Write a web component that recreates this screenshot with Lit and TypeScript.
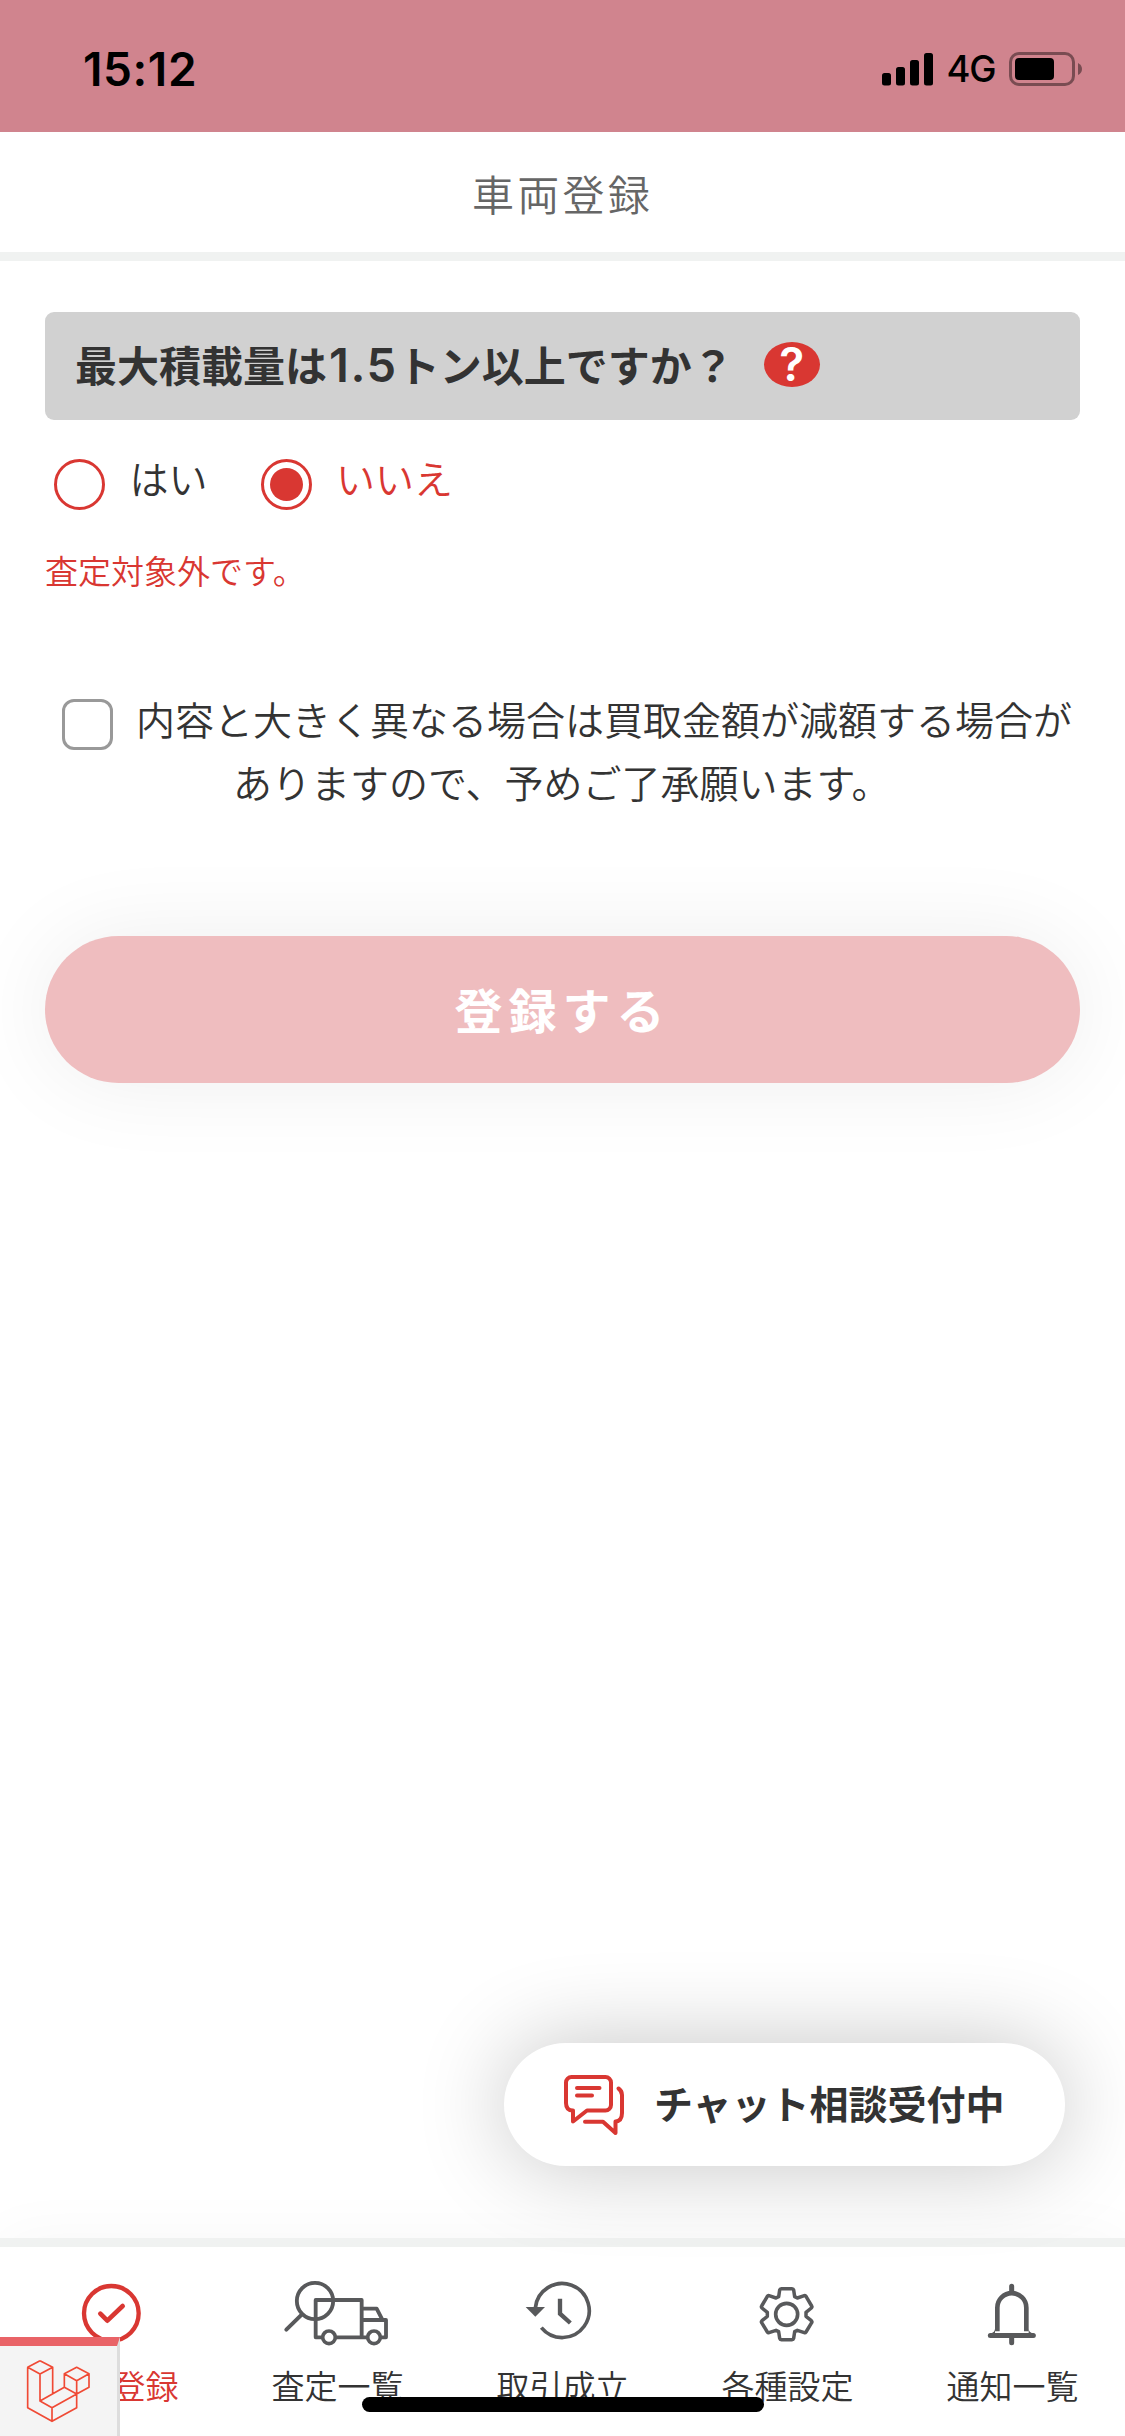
import { LitElement, html, css, svg } from "lit";
import { customElement, property, state } from "lit/decorators.js";
import { classMap } from "lit/directives/class-map.js";

const tabIcons: Record<string, { viewBox: string; art: unknown }> = {
  check: {
    viewBox: "0 63 675 330",
    art: svg`<circle cx="334" cy="262" r="82" stroke-width="13"/>
      <path d="M301 263L322 284L368 240" stroke-width="14"/>`,
  },
  truck: {
    viewBox: "675 63 675 330",
    art: svg`<circle cx="945" cy="225" r="54.5" stroke-width="11.5"/>
      <path d="M905 266L859 311" stroke-width="12"/>
      <path d="M966 334H947V222H1085V334M1007 334H1102M1088 248H1130L1147 281M1088 282H1158V334H1144" stroke-width="11.5"/>
      <circle cx="987" cy="334" r="19" stroke-width="11"/>
      <circle cx="1122" cy="334" r="19" stroke-width="11"/>`,
  },
  history: {
    viewBox: "150 63 675 330",
    art: svg`<path d="M424 305A81 81 0 1 0 406 246" stroke-width="11" stroke-linecap="butt"/>
      <path d="M377 243H435L406 272Z" fill="currentColor" stroke="none"/>
      <path d="M480 218V263L511 291" stroke-width="13" stroke-linecap="butt" stroke-linejoin="miter"/>`,
  },
  gear: {
    viewBox: "-150 63 675 330",
    art: svg`<path d="M169 188H201Q205 188 206 192L209 212L217 216L238 209Q241 208 243 211L260 240Q262 243 259 246L243 259V271L259 284Q262 287 260 290L243 318Q241 321 238 320L217 313L209 317L206 337Q205 341 201 341H169Q165 341 164 337L161 317L153 313L132 320Q129 321 127 318L110 290Q108 287 111 284L127 271V259L111 246Q108 243 110 240L127 211Q129 208 132 209L153 216L161 212L164 192Q165 188 169 188Z" stroke-width="10.5"/>
      <circle cx="185" cy="265" r="33" stroke-width="11"/>`,
  },
  bell: {
    viewBox: "525 63 675 330",
    art: svg`<path d="M860 181V196M860 336V350" stroke-width="15"/>
      <path d="M817 316V245A43.500 43.500 0 0 1 904 245V316" stroke-width="14" stroke-linecap="butt"/>
      <path d="M810 308Q810 318 796 323L925 323Q911 318 911 308V325H810Z" fill="currentColor" stroke="none"/>
      <path d="M796 328.500H925" stroke-width="15"/>`,
  },
};

@customElement("tab-item")
class TabItem extends LitElement {
  @property() icon = "check";
  @property() label = "";

  static styles = css`
    :host {
      display: flex;
      flex-direction: column;
      width: 225px;
    }
    .icon {
      display: block;
      width: 225px;
      height: 110px;
      fill: none;
      stroke: currentColor;
      stroke-linecap: round;
      stroke-linejoin: round;
    }
    .label {
      text-align: center;
      font-size: 33px;
      line-height: 57px;
      color: var(--label-color, #333);
    }
  `;

  render() {
    const icon = tabIcons[this.icon];
    return html`
      <svg class="icon" viewBox=${icon.viewBox}>${icon.art}</svg>
      <span class="label">${this.label}</span>
    `;
  }
}

@customElement("app-root")
class AppRoot extends LitElement {
  @state() private answer = "いいえ";

  static styles = css`
    :host {
      display: block;
      font-family: "Noto Sans CJK JP", sans-serif;
      font-weight: 350;
      color: #333;
    }
    .screen {
      position: relative;
      box-sizing: border-box;
      width: 1125px;
      height: 2436px;
      display: flex;
      flex-direction: column;
      background: #fff;
      overflow: hidden;
    }
    .status {
      box-sizing: border-box;
      height: 132px;
      flex: none;
      display: flex;
      justify-content: space-between;
      align-items: center;
      padding: 6px 43px 0 83px;
      background: #d0848e;
      color: #000;
      font-family: Inter, sans-serif;
    }
    .time {
      font-size: 46px;
      font-weight: 600;
      letter-spacing: 0.6px;
    }
    .signals {
      display: flex;
      align-items: center;
    }
    .bars {
      width: 51px;
      height: 34px;
    }
    .network {
      width: 76px;
      text-align: center;
      font-size: 36.500px;
      font-weight: 500;
      letter-spacing: -1px;
    }
    .battery {
      width: 73px;
      height: 34px;
    }
    .header {
      height: 120px;
      flex: none;
      border-bottom: 9px solid #f0f2f1;
      text-align: center;
      font-size: 42px;
      line-height: 121px;
      letter-spacing: 3.2px;
      color: #666;
    }
    .content {
      flex: 1;
      padding: 51px 45px 0;
    }
    .question {
      display: flex;
      align-items: center;
      height: 108px;
      border-radius: 9px;
      background: #d1d1d1;
      padding-left: 30px;
      font-size: 42px;
      font-weight: 600;
    }
    .text {
      margin-top: -6px;
    }
    .number {
      display: inline-block;
      width: 68.800px;
      padding-left: 2px;
      font-family: Inter, sans-serif;
      font-size: 47px;
      line-height: 47px;
      letter-spacing: 1.5px;
    }
    .help {
      width: 56px;
      height: 45px;
      margin: -3px 0 0 30px;
      border-radius: 50%;
      background: #d93732;
      color: #fff;
      line-height: 44px;
      text-align: center;
      font-family: Inter, sans-serif;
      font-size: 46px;
      font-weight: 600;
    }
    .options {
      display: flex;
      gap: 53px;
      padding: 39px 9px 0;
    }
    .option {
      display: flex;
      font-size: 39px;
      line-height: 51px;
      gap: 24.500px;
      cursor: pointer;
    }
    .option.selected {
      color: #d93732;
    }
    .option span {
      margin-top: -7px;
      height: 51px;
    }
    .radio {
      box-sizing: border-box;
      width: 51px;
      height: 51px;
      padding: 6px;
      border: 3px solid #d93732;
      border-radius: 50%;
    }
    .selected .radio {
      background: #d93732 content-box;
    }
    .error {
      margin-top: 35px;
      font-size: 33px;
      line-height: 50px;
      color: #d93732;
    }
    .agree {
      display: flex;
      margin: 92px 0 0 17px;
      gap: 23px;
      font-size: 39px;
      line-height: 63px;
      white-space: nowrap;
    }
    .checkbox {
      box-sizing: border-box;
      flex: none;
      width: 51px;
      height: 51px;
      margin-top: 12px;
      border: 3px solid #999;
      border-radius: 12px;
    }
    .second {
      display: block;
      margin-left: 97px;
    }
    .submit {
      display: block;
      width: 1035px;
      height: 147px;
      margin-top: 123px;
      padding: 0 0 3px 0;
      border: 0;
      border-radius: 74px;
      background: #efbdbf;
      box-shadow: 0 0 90px rgba(0, 0, 0, 0.07);
      color: #fff;
      font-family: inherit;
      font-size: 48px;
      font-weight: 600;
      letter-spacing: 6px;
    }
    .tabs {
      display: flex;
      flex: none;
      height: 189px;
      border-top: 9px solid #f0f2f1;
      color: #58595b;
      background: #fff;
      box-shadow: 0 0 60px rgba(0, 0, 0, 0.035);
    }
    .active {
      color: #d93732;
      --label-color: #d93732;
    }
    .chat {
      position: absolute;
      left: 504px;
      top: 2043px;
      box-sizing: border-box;
      width: 561px;
      height: 123px;
      padding-left: 60px;
      display: flex;
      align-items: center;
      gap: 30px;
      border-radius: 62px;
      background: #fff;
      box-shadow: 0 0 90px rgba(0, 0, 0, 0.23);
      font-size: 39px;
      font-weight: 600;
    }
    .chat span {
      margin-top: -5px;
    }
    .chat svg {
      width: 60px;
      height: 60px;
      fill: none;
      stroke: #d93732;
      stroke-width: 4;
      stroke-linecap: round;
      stroke-linejoin: round;
    }
    .debug {
      position: absolute;
      left: 0;
      bottom: 0;
      box-sizing: border-box;
      width: 120px;
      height: 99px;
      border-top: 9px solid #e96367;
      border-right: 3px solid #ddd;
      background: #f4f4f4;
    }
    .debug svg {
      display: block;
      width: 117px;
      height: 90px;
      fill: none;
      stroke: #f04a35;
      stroke-width: 5;
      stroke-linejoin: round;
    }
    .home {
      position: absolute;
      left: 362px;
      top: 2397px;
      width: 402px;
      height: 15px;
      border-radius: 8px;
      background: #000;
    }
  `;

  private option(label: string) {
    const selected = this.answer === label;
    return html`
      <label class=${classMap({ option: true, selected })} @click=${() => (this.answer = label)}>
        <i class="radio"></i><span>${label}</span>
      </label>
    `;
  }

  render() {
    return html`
      <div class="screen" lang="ja">
        <div class="status">
          <span class="time">15:12</span>
          <div class="signals">
            <svg class="bars" viewBox="0 0 51 34">
              <rect x="0" y="21" width="9" height="12.500" rx="2.500"/>
              <rect x="14" y="15" width="9" height="18.500" rx="2.500"/>
              <rect x="28" y="8" width="9" height="25.500" rx="2.500"/>
              <rect x="42" y="1" width="9" height="32.500" rx="2.500"/>
            </svg>
            <span class="network">4G</span>
            <svg class="battery" viewBox="0 0 73 34">
              <rect x="1.500" y="1.500" width="63" height="31" rx="8.500" fill="none" stroke="#000" stroke-opacity=".42" stroke-width="3"/>
              <rect x="6" y="6" width="39" height="22" rx="4"/>
              <path d="M69 11Q73 13 73 17T69 23Z" fill-opacity=".42"/>
            </svg>
          </div>
        </div>
        <div class="header">車両登録</div>
        <div class="content">
          <div class="question">
            <span class="text">最大積載量は<span class="number">1.5</span>トン以上ですか？</span>
            <span class="help">?</span>
          </div>
          <div class="options">${this.option("はい")}${this.option("いいえ")}</div>
          <div class="error">査定対象外です。</div>
          <div class="agree">
            <i class="checkbox"></i>
            <span>内容と大きく異なる場合は買取金額が減額する場合が<span class="second">ありますので、予めご了承願います。</span></span>
          </div>
          <button class="submit">登録する</button>
        </div>
        <div class="tabs">
          <tab-item class="active" icon="check" label="車両登録"></tab-item>
          <tab-item icon="truck" label="査定一覧"></tab-item>
          <tab-item icon="history" label="取引成立"></tab-item>
          <tab-item icon="gear" label="各種設定"></tab-item>
          <tab-item icon="bell" label="通知一覧"></tab-item>
        </div>
        <div class="chat">
          <svg viewBox="0 0 60 60">
            <path d="M23 35.500H41.500A5.500 5.500 0 0 0 47 30V7.500A5.500 5.500 0 0 0 41.500 2H7.500A5.500 5.500 0 0 0 2 7.500V28Q2 35.500 9 35.500V46.500Z"/>
            <path d="M13 13H35.500M13 20.500H28M54.500 13.500Q58 16 58 20V38Q58 46 51.500 46.500V58L39 46.700H21"/>
          </svg>
          <span>チャット相談受付中</span>
        </div>
        <div class="debug">
          <svg viewBox="0 360 351 270">
            <path d="M120 404L158 424V504M158 424L120 444L83 424L120 404M83 424V545L156 586L230 545V504L267 484V443L230 424L193 443V484L230 504L156 545L120 525V444M120 525L193 484M156 545V586M193 443L230 464L267 443M230 464V504"/>
          </svg>
        </div>
        <div class="home"></div>
      </div>
    `;
  }
}
